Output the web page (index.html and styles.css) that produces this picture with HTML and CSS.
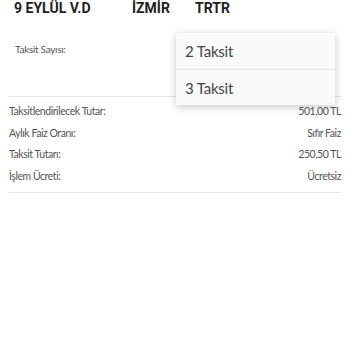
FILE: index.html
```html
<!DOCTYPE html>
<html>
<head>
    <title>Taksit</title>
    <link rel="stylesheet" href="styles.css">
</head>
<body>
    <div class="header">
        <span class="office">9 EYLÜL V.D</span>
        <span class="city">İZMİR</span>
        <span class="code">TRTR</span>
    </div>

    <div class="installment">
        <span class="label">Taksit Sayısı:</span>
        <ul class="dropdown">
            <li>2 Taksit</li>
            <li>3 Taksit</li>
        </ul>
    </div>

    <div class="summary">
        <div class="row"><span>Taksitlendirilecek Tutar:</span><span>501,00 TL</span></div>
        <div class="row"><span>Aylık Faiz Oranı:</span><span>Sıfır Faiz</span></div>
        <div class="row"><span>Taksit Tutarı:</span><span>250,50 TL</span></div>
        <div class="row"><span>İşlem Ücreti:</span><span>Ücretsiz</span></div>
    </div>
</body>
</html>
```

FILE: styles.css
```css
* {
    margin: 0;
    padding: 0;
    box-sizing: border-box;
}

body {
    background-color: #ffffff;
    font-family: Lato, "Open Sans", sans-serif;
    color: #555555;
    width: 350px;
    height: 350px;
    overflow: hidden;
}

.header {
    display: flex;
    padding: 1px 0 0 14px;
    height: 16px;
    font-family: Roboto, "Liberation Sans", sans-serif;
    font-weight: bold;
    font-size: 14px;
    line-height: 14px;
    color: #222222;
}

.office {
    width: 118px;
}

.city {
    width: 63px;
}

.installment {
    position: relative;
    height: 81px;
    margin: 0 9px;
    border-bottom: 1px solid #e6e6e6;
}

.label {
    display: block;
    padding: 27px 0 0 6px;
    font-size: 10px;
    letter-spacing: -0.3px;
    color: #555555;
}

.dropdown {
    position: absolute;
    left: 167px;
    top: 17px;
    width: 159px;
    list-style: none;
    background-color: #fafafa;
    box-shadow: 0 2px 8px rgba(0, 0, 0, 0.22);
}

.dropdown li {
    height: 36px;
    line-height: 36px;
    padding-left: 9px;
    font-size: 15px;
    letter-spacing: -0.2px;
    color: #444444;
}

.dropdown li + li {
    border-top: 1px solid #e2e2e2;
}

.summary {
    margin: 0 9px;
    padding: 4px 0 5px;
    border-bottom: 1px solid #e6e6e6;
}

.row {
    display: flex;
    justify-content: space-between;
    height: 21.5px;
    line-height: 21.5px;
    font-size: 10.5px;
    letter-spacing: -0.45px;
    color: #555555;
}
```
